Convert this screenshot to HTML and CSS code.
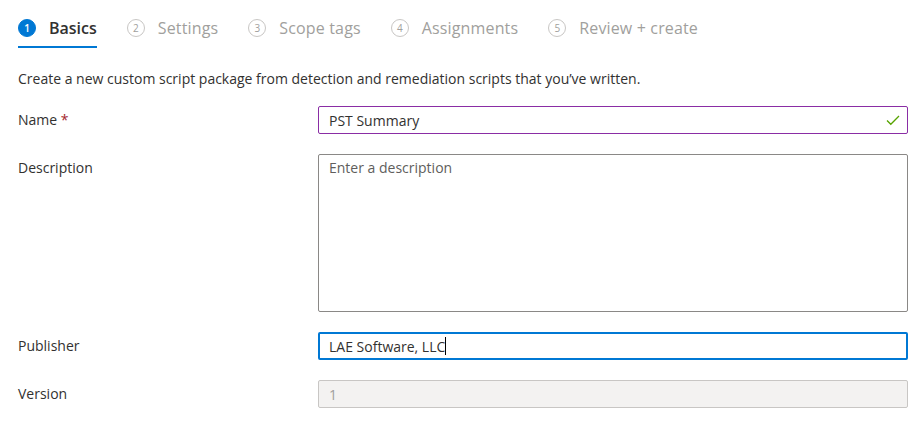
FILE: index.html
```html
<!DOCTYPE html>
<html lang="en">
<head>
<meta charset="utf-8">
<title>Create custom script</title>
<link rel="stylesheet" href="styles.css">
</head>
<body>
<div class="page">
  <nav class="steps">
    <div class="step active"><span class="num">1</span><span class="label">Basics</span></div>
    <div class="step"><span class="num">2</span><span class="label">Settings</span></div>
    <div class="step"><span class="num">3</span><span class="label">Scope tags</span></div>
    <div class="step"><span class="num">4</span><span class="label">Assignments</span></div>
    <div class="step"><span class="num">5</span><span class="label">Review + create</span></div>
  </nav>
  <p class="intro">Create a new custom script package from detection and remediation scripts that you’ve written.</p>
  <form class="form">
    <label class="lbl">Name <span class="req">*</span></label>
    <div class="field valid">
      <span class="value">PST Summary</span>
      <svg class="check" width="14" height="12" viewBox="0 0 14 12"><path d="M1 6.5 L4.8 10.3 L13 2" fill="none" stroke="#57a300" stroke-width="1.3"/></svg>
    </div>
    <label class="lbl">Description</label>
    <div class="field area"><span class="placeholder">Enter a description</span></div>
    <label class="lbl">Publisher</label>
    <div class="field focused"><span class="value">LAE Software, LLC</span><span class="caret"></span></div>
    <label class="lbl">Version</label>
    <div class="field disabled"><span class="value">1</span></div>
  </form>
</div>
</body>
</html>
```
FILE: styles.css
```css
html, body {
  margin: 0;
  padding: 0;
  background: #ffffff;
}
body {
  font-family: "Open Sans", "Noto Sans", sans-serif;
  color: #323130;
  font-size: 14px;
}
.page {
  padding: 17px 0 0 18px;
}
.steps {
  display: flex;
  gap: 30px;
  height: 31px;
}
.step {
  display: flex;
  align-items: flex-start;
  gap: 13px;
  height: 29px;
  border-bottom: 2px solid transparent;
}
.step.active {
  border-bottom-color: #0078d4;
}
.num {
  width: 18px;
  height: 18px;
  margin-top: 2px;
  box-sizing: border-box;
  border: 1px solid #c8c6c4;
  border-radius: 50%;
  display: flex;
  align-items: center;
  justify-content: center;
  font-size: 10px;
  color: #a19f9d;
  line-height: 1;
}
.step.active .num {
  background: #0078d4;
  border-color: #0078d4;
  color: #fff;
  font-weight: 600;
}
.label {
  font-size: 16px;
  line-height: 22px;
  color: #a19f9d;
  letter-spacing: 0.15px;
}
.step.active .label {
  color: #323130;
  font-weight: 600;
  letter-spacing: 0;
}
.intro {
  margin: 21px 0 0 0;
  line-height: 20px;
  color: #323130;
}
.form {
  display: grid;
  grid-template-columns: 300px 590px;
  row-gap: 20px;
  margin-top: 17px;
}
.lbl {
  line-height: 20px;
  padding-top: 4px;
}
.req {
  color: #a4262c;
}
.field {
  box-sizing: border-box;
  height: 28px;
  border: 1px solid #8a8886;
  border-radius: 2px;
  padding: 0 10px;
  display: flex;
  align-items: center;
}
.field.valid {
  border-color: #8a2da5;
  justify-content: space-between;
}
.check {
  margin-right: -3px;
}
.field.area {
  height: 158px;
  align-items: flex-start;
  padding-top: 3px;
}
.placeholder {
  color: #605e5c;
}
.field.focused {
  border: 2px solid #0078d4;
  padding-left: 9px;
}
.caret {
  width: 1px;
  height: 18px;
  background: #000;
}
.field.disabled {
  background: #f3f2f1;
  border-color: #c8c6c4;
}
.field.disabled .value {
  color: #a19f9d;
}
```
